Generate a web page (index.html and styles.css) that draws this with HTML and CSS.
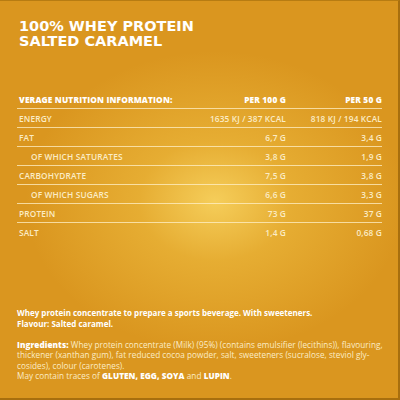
FILE: index.html
```html
<!DOCTYPE html>
<html>
<head>
<meta charset="utf-8">
<link rel="stylesheet" href="styles.css">
</head>
<body>
<div class="panel">
  <h1 class="title">100% WHEY PROTEIN<br>SALTED CARAMEL</h1>
  <div class="table">
    <div class="row head"><span class="name">VERAGE NUTRITION INFORMATION:</span><span class="v1">PER 100 G</span><span class="v2">PER 50 G</span></div>
    <div class="row"><span class="name">ENERGY</span><span class="v1">1635 KJ / 387 KCAL</span><span class="v2">818 KJ / 194 KCAL</span></div>
    <div class="row"><span class="name">FAT</span><span class="v1">6,7 G</span><span class="v2">3,4 G</span></div>
    <div class="row"><span class="name sub">OF WHICH SATURATES</span><span class="v1">3,8 G</span><span class="v2">1,9 G</span></div>
    <div class="row"><span class="name">CARBOHYDRATE</span><span class="v1">7,5 G</span><span class="v2">3,8 G</span></div>
    <div class="row"><span class="name sub">OF WHICH SUGARS</span><span class="v1">6,6 G</span><span class="v2">3,3 G</span></div>
    <div class="row"><span class="name">PROTEIN</span><span class="v1">73 G</span><span class="v2">37 G</span></div>
    <div class="row last"><span class="name">SALT</span><span class="v1">1,4 G</span><span class="v2">0,68 G</span></div>
  </div>
  <div class="info">
    <p class="strong">Whey protein concentrate to prepare a sports beverage. With sweeteners.<br>Flavour: Salted caramel.</p>
    <p class="ingr"><b>Ingredients:</b> Whey protein concentrate (Milk) (95%) (contains emulsifier (lecithins)), flavouring,<br>thickener (xanthan gum), fat reduced cocoa powder, salt, sweeteners (sucralose, steviol gly-<br>cosides), colour (carotenes).<br>May contain traces of <b>GLUTEN, EGG, SOYA</b> and <b>LUPIN</b>.</p>
  </div>
</div>
</body>
</html>
```
FILE: styles.css
```css
html, body { margin: 0; padding: 0; }
body { width: 400px; height: 400px; overflow: hidden; font-family: "Open Sans", "DejaVu Sans", sans-serif; }
.panel {
  box-sizing: border-box;
  width: 400px; height: 400px;
  border-top: 1px solid #b77c12;
  border-right: 2px solid #a86f0e;
  border-bottom: 2px solid #a86f0e;
  background:
    radial-gradient(ellipse 190px 150px at 215px 200px, rgba(250,215,100,0.85) 0%, rgba(242,196,70,0.5) 40%, rgba(230,170,40,0) 100%),
    #da961f;
  padding: 18px 16px 0 17px;
  color: #fff;
}
.title {
  margin: 0 0 0 2px;
  font-family: "DejaVu Sans", sans-serif;
  font-weight: 700;
  font-size: 14.5px;
  line-height: 15px;
}
.table { margin-top: 41px; }
.row {
  display: grid;
  grid-template-columns: 1fr 105px 96px;
  height: 18px;
  align-items: center;
  border-bottom: 1px solid rgba(255,240,200,0.75);
  font-size: 8.3px;
  font-weight: 600;
  color: #fbecc6;
  letter-spacing: 0.15px;
  white-space: nowrap;
}
.row.last { border-bottom: none; }
.row span { padding-top: 1px; }
.row .name { padding-left: 2px; }
.row .name.sub { padding-left: 14px; }
.row .v1, .row .v2 { text-align: right; }
.row.head { font-weight: 800; color: #fff; }
.info { margin-top: 67px; width: 366px; font-size: 8px; line-height: 10.5px; color: #fbecc6; font-weight: 500; white-space: nowrap; }
.info p { margin: 0 0 10.5px; }
.info .ingr { font-size: 8.2px; letter-spacing: 0.05px; }
.info .strong { color: #fff; font-weight: 700; }
.info b { color: #fff; font-weight: 800; }
```
